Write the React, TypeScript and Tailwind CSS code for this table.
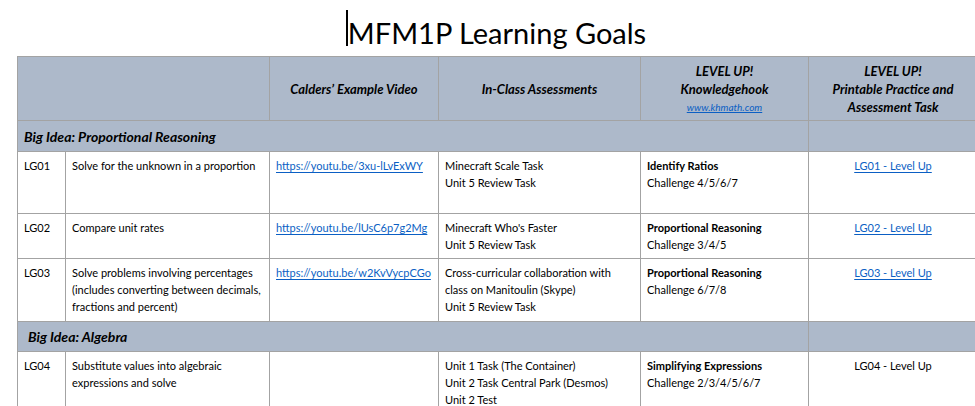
import React from 'react';

type Goal = {
  code: string;
  desc: string[];
  video?: string;
  assess: string[];
  khTopic: string;
  khChallenge: string;
  levelUp: string;
  levelUpLink: boolean;
  height: string;
};

const proportional: Goal[] = [
  {
    code: 'LG01',
    desc: ['Solve for the unknown in a proportion'],
    video: 'https://youtu.be/3xu-lLvExWY',
    assess: ['Minecraft Scale Task', 'Unit 5 Review Task'],
    khTopic: 'Identify Ratios',
    khChallenge: 'Challenge 4/5/6/7',
    levelUp: 'LG01 - Level Up',
    levelUpLink: true,
    height: 'h-[62px]',
  },
  {
    code: 'LG02',
    desc: ['Compare unit rates'],
    video: 'https://youtu.be/lUsC6p7g2Mg',
    assess: ["Minecraft Who's Faster", 'Unit 5 Review Task'],
    khTopic: 'Proportional Reasoning',
    khChallenge: 'Challenge 3/4/5',
    levelUp: 'LG02 - Level Up',
    levelUpLink: true,
    height: 'h-[45px]',
  },
  {
    code: 'LG03',
    desc: ['Solve problems involving percentages', '(includes converting between decimals,', 'fractions and percent)'],
    video: 'https://youtu.be/w2KvVycpCGo',
    assess: ['Cross-curricular collaboration with', 'class on Manitoulin (Skype)', 'Unit 5 Review Task'],
    khTopic: 'Proportional Reasoning',
    khChallenge: 'Challenge 6/7/8',
    levelUp: 'LG03 - Level Up',
    levelUpLink: true,
    height: 'h-[63px]',
  },
];

const algebra: Goal[] = [
  {
    code: 'LG04',
    desc: ['Substitute values into algebraic', 'expressions and solve'],
    assess: ['Unit 1 Task (The Container)', 'Unit 2 Task Central Park (Desmos)', 'Unit 2 Test'],
    khTopic: 'Simplifying Expressions',
    khChallenge: 'Challenge 2/3/4/5/6/7',
    levelUp: 'LG04 - Level Up',
    levelUpLink: false,
    height: 'h-[62px]',
  },
];

const cell = 'border border-[#a3a3a3] align-top px-[6px] pt-[5px] pb-[4px] whitespace-nowrap overflow-hidden';
const link = 'text-[#0b5fc4] underline underline-offset-[2px]';

const GoalRow: React.FC<{ goal: Goal }> = ({ goal }) => (
  <tr className={goal.height}>
    <td className={cell}>{goal.code}</td>
    <td className={cell}>
      {goal.desc.map((d) => (
        <div key={d}>{d}</div>
      ))}
    </td>
    <td className={cell}>{goal.video && <span className={link}>{goal.video}</span>}</td>
    <td className={cell}>
      {goal.assess.map((a) => (
        <div key={a}>{a}</div>
      ))}
    </td>
    <td className={cell}>
      <div className="font-bold">{goal.khTopic}</div>
      <div>{goal.khChallenge}</div>
    </td>
    <td className={`${cell} text-center`}>
      <span className={goal.levelUpLink ? link : ''}>{goal.levelUp}</span>
    </td>
  </tr>
);

const BigIdea: React.FC<{ title: string; height: string; indent: string }> = ({ title, height, indent }) => (
  <tr className={`${height} bg-[#adb9ca]`}>
    <td colSpan={5} className={`border border-[#a3a3a3] pr-[6px] ${indent} align-middle font-bold italic text-[14px]`}>
      {title}
    </td>
    <td className="border border-[#a3a3a3]"></td>
  </tr>
);

export default function App() {
  return (
    <div className="w-[975px] h-[406px] overflow-hidden bg-white text-black font-['Lato','Open_Sans',sans-serif] text-[11px] leading-[17px]">
      <div className="ml-[17px] w-[960px]">
        <div className="h-[56px] flex items-center justify-center pt-[8px]">
          <span className="relative text-[29px] leading-none">
            <span className="absolute left-[-2px] top-[-8px] w-[2px] h-[36px] bg-black"></span>
            MFM1P Learning Goals
          </span>
        </div>
        <table className="table-fixed border-collapse w-[960px]">
          <colgroup>
            <col className="w-[48px]" />
            <col className="w-[204px]" />
            <col className="w-[169px]" />
            <col className="w-[202px]" />
            <col className="w-[168px]" />
            <col className="w-[169px]" />
          </colgroup>
          <tbody>
            <tr className="h-[64px] bg-[#adb9ca] font-bold italic text-center text-[13px] leading-[18px]">
              <td colSpan={2} className="border border-[#a3a3a3]"></td>
              <td className="border border-[#a3a3a3]">Calders’ Example Video</td>
              <td className="border border-[#a3a3a3]">In-Class Assessments</td>
              <td className="border border-[#a3a3a3]">
                <div>LEVEL UP!</div>
                <div>Knowledgehook</div>
                <div className="text-[10px] font-normal text-[#0b5fc4] underline">www.khmath.com</div>
              </td>
              <td className="border border-[#a3a3a3]">
                <div>LEVEL UP!</div>
                <div>Printable Practice and</div>
                <div>Assessment Task</div>
              </td>
            </tr>
            <BigIdea title="Big Idea: Proportional Reasoning" height="h-[31px]" indent="pl-[6px]" />
            {proportional.map((g) => (
              <GoalRow key={g.code} goal={g} />
            ))}
            <BigIdea title="Big Idea: Algebra" height="h-[30px]" indent="pl-[10px]" />
            {algebra.map((g) => (
              <GoalRow key={g.code} goal={g} />
            ))}
          </tbody>
        </table>
      </div>
    </div>
  );
}
